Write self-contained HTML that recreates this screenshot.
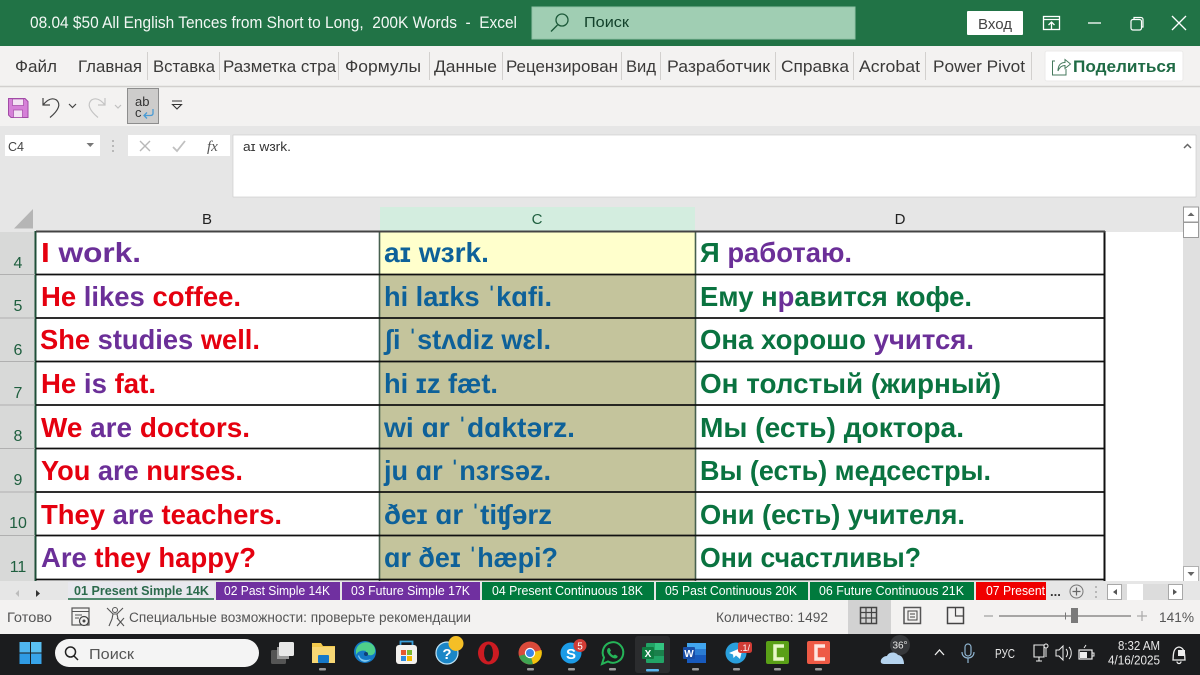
<!DOCTYPE html>
<html><head><meta charset="utf-8"><style>
html,body{margin:0;padding:0;background:#fff;width:1200px;height:675px;overflow:hidden}
svg{display:block;filter:blur(.35px)}
text{font-family:"Liberation Sans","DejaVu Sans",sans-serif}
.b{font-weight:700;font-size:28px}
.r{fill:#e5000f}.p{fill:#6b2f98}.u{fill:#0e6199}.g{fill:#0a7340}
.rib{font-size:17px;fill:#3b3a39}
.sep{stroke:#d2d0ce;stroke-width:1}
.rn{font-size:16px;fill:#1f5f3f;text-anchor:middle}
.tab{font-size:13px;fill:#fff}
.st{font-size:13.5px;fill:#555}
.tb{font-size:13px;fill:#e8e8e8}
</style></head><body>
<svg width="1200" height="675" viewBox="0 0 1200 675" xmlns="http://www.w3.org/2000/svg">
<!-- title bar -->
<rect width="1200" height="46" fill="#217346"/>
<text x="30" y="28" font-size="16.500" fill="#f2f7f4" textLength="487" lengthAdjust="spacingAndGlyphs" xml:space="preserve">08.04 $50 All English Tences from Short to Long,  200K Words  -  Excel</text>
<rect x="532" y="7" width="323" height="32" fill="#a0ceb3" stroke="#8fc2a5"/>
<circle cx="562" cy="20" r="6" fill="none" stroke="#1d5a3a" stroke-width="1.3"/><path d="M557.500 25 L551 31.500" stroke="#1d5a3a" stroke-width="1.4"/>
<text x="584" y="27" font-size="14.500" fill="#12402a" textLength="45" lengthAdjust="spacingAndGlyphs">Поиск</text>
<rect x="967" y="11" width="56" height="24" fill="#fff" rx="1"/>
<text x="978" y="29" font-size="15" fill="#444" textLength="34" lengthAdjust="spacingAndGlyphs">Вход</text>
<rect x="1043.500" y="16.500" width="16" height="13" fill="none" stroke="#fff" stroke-width="1.300"/><path d="M1044 19.500H1059M1051.500 29V22.500M1048.500 25L1051.500 22L1054.500 25" stroke="#fff" fill="none" stroke-width="1.300"/>
<path d="M1088 23H1101" stroke="#fff" stroke-width="1.300"/>
<rect x="1131" y="19.500" width="10.500" height="10.500" rx="2" fill="none" stroke="#fff" stroke-width="1.200"/><path d="M1134 19V17.500h7a2 2 0 0 1 2 2V27H1142" fill="none" stroke="#fff" stroke-width="1.200"/>
<path d="M1172 16L1186 30M1186 16L1172 30" stroke="#fff" stroke-width="1.300"/>
<!-- ribbon tabs -->
<rect y="46" width="1200" height="80" fill="#f3f2f1"/>
<path d="M0 86.500H1200" stroke="#d2d0ce" stroke-width="1.400"/>
<g class="rib">
<text x="15" y="72" class="rib" textLength="42" lengthAdjust="spacingAndGlyphs">Файл</text>
<text x="78" y="72" class="rib" textLength="64" lengthAdjust="spacingAndGlyphs">Главная</text>
<text x="153" y="72" class="rib" textLength="62" lengthAdjust="spacingAndGlyphs">Вставка</text>
<text x="223" y="72" class="rib" textLength="113" lengthAdjust="spacingAndGlyphs">Разметка стра</text>
<text x="345" y="72" class="rib" textLength="76" lengthAdjust="spacingAndGlyphs">Формулы</text>
<text x="434" y="72" class="rib" textLength="63" lengthAdjust="spacingAndGlyphs">Данные</text>
<text x="506" y="72" class="rib" textLength="112" lengthAdjust="spacingAndGlyphs">Рецензирован</text>
<text x="626" y="72" class="rib" textLength="30" lengthAdjust="spacingAndGlyphs">Вид</text>
<text x="667" y="72" class="rib" textLength="103" lengthAdjust="spacingAndGlyphs">Разработчик</text>
<text x="781" y="72" class="rib" textLength="68" lengthAdjust="spacingAndGlyphs">Справка</text>
<text x="859" y="72" class="rib" textLength="61" lengthAdjust="spacingAndGlyphs">Acrobat</text>
<text x="933" y="72" class="rib" textLength="92" lengthAdjust="spacingAndGlyphs">Power Pivot</text>
</g>
<path class="sep" d="M147.500 52V80M219.500 52V80M338.500 52V80M429.500 52V80M502.500 52V80M621.500 52V80M660.500 52V80M775.500 52V80M853.500 52V80M925.500 52V80M1031.500 52V80"/>
<rect x="1045" y="51" width="138" height="30" rx="2" fill="#fff" stroke="#ebeae9"/>
<path d="M1055 61H1052.500V75H1066V69M1058 71C1058 65 1061 62.500 1065 62.500V59.500L1070.500 64L1065 68.500V65.500C1062 65.500 1059.500 67 1058 71Z" fill="none" stroke="#46795d" stroke-width="1"/>
<text x="1073" y="72" font-size="16.500" font-weight="700" fill="#1f6b45" textLength="103" lengthAdjust="spacingAndGlyphs">Поделиться</text>
<!-- QAT -->
<path d="M8.500 98.500H25L28 101.500V117.500H11L8.500 115Z" fill="#d680d8" stroke="#a24ba6"/>
<rect x="12.500" y="99" width="11" height="6.500" fill="#f3e2f3" stroke="#a24ba6" stroke-width=".7"/><rect x="13.500" y="110" width="9" height="7.500" fill="#f3e2f3" stroke="#a24ba6" stroke-width=".7"/>
<path d="M43 98V105H50M43 105C47 100 52 97 56.500 100C61 104 59 110 50 117.500" fill="none" stroke="#444" stroke-width="1.200"/>
<path d="M69 104L72.500 107.500L76 104" fill="none" stroke="#444" stroke-width="1.200"/>
<path d="M105 98V105H98M105 105C101 100 96 97 91.500 100C87 104 89 110 98 117.500" fill="none" stroke="#c4c4c4" stroke-width="1.200"/>
<path d="M115 105L118 108L121 105" fill="none" stroke="#c0c0c0" stroke-width="1.200"/>
<rect x="127.500" y="88.500" width="31" height="35" fill="#cdcccb" stroke="#8d8d8d"/>
<text x="135" y="106" font-size="13" fill="#333">ab</text><text x="135" y="117" font-size="13" fill="#333">c</text>
<path d="M153 109V113.500C153 115 152 115.500 150 115.500H144M147 112.500L144 115.500L147 118.500" fill="none" stroke="#4a9bd4" stroke-width="1.300"/>
<path d="M172 101H182M172.500 104.500L177 109L181.500 104.500Z" stroke="#333" stroke-width="1.100" fill="#f3f2f1"/>
<!-- formula bar -->
<rect y="126" width="1200" height="81" fill="#e6e6e6"/>
<rect x="5" y="135" width="95" height="21" fill="#fff"/>
<text x="8" y="151" font-size="13" fill="#444" textLength="16" lengthAdjust="spacingAndGlyphs">C4</text>
<path d="M86.500 143H94L90.250 147Z" fill="#777"/>
<circle cx="113" cy="141" r="1" fill="#aaa"/><circle cx="113" cy="146" r="1" fill="#aaa"/><circle cx="113" cy="151" r="1" fill="#aaa"/>
<rect x="128" y="135" width="102" height="21" fill="#fff"/>
<path d="M140 141L150 151M150 141L140 151" stroke="#b8b8b8" stroke-width="1.400"/>
<path d="M173 147L177 151L185 141" fill="none" stroke="#c0c0c0" stroke-width="1.800"/>
<text x="207" y="151" font-size="15" font-style="italic" fill="#555" style="font-family:'Liberation Serif',serif">fx</text>
<rect x="233" y="135" width="963" height="62" fill="#fff" stroke="#c9c9c9" stroke-width=".6"/>
<text x="243" y="151" font-size="13" fill="#333" textLength="48" lengthAdjust="spacingAndGlyphs">aɪ wɜrk.</text>
<path d="M1184 148L1187.500 144.500L1191 148" fill="none" stroke="#666" stroke-width="1.500"/>
<!-- sheet headers -->
<rect y="207" width="1184" height="25" fill="#e6e6e6"/>
<path d="M14 228.500L33 209V228.500Z" fill="#b5b5b5"/>
<rect x="380" y="207" width="315" height="25" fill="#d3eddf"/>
<text x="207" y="224" font-size="15" fill="#222" text-anchor="middle">B</text>
<text x="537" y="224" font-size="15" fill="#1f5f3f" text-anchor="middle">C</text>
<text x="900" y="224" font-size="15" fill="#222" text-anchor="middle">D</text>
<rect y="232" width="36" height="350" fill="#d8d9d8"/>
<!-- cells -->
<rect x="36" y="232" width="1069" height="350" fill="#fff"/>
<rect x="1105" y="232" width="78" height="350" fill="#fff"/>
<rect x="380" y="232" width="315" height="350" fill="#c4c49c"/>
<rect x="380" y="232" width="315" height="42" fill="#ffffcc"/>
<path d="M35.500 231V581" stroke="#1f4f38" stroke-width="2"/>
<path d="M379.500 231V581M695.500 231V581" stroke="#47604f" stroke-width="1.600"/>
<path d="M1104.500 231V581" stroke="#111" stroke-width="2"/>
<path d="M36 231.500H1105" stroke="#444" stroke-width="2"/>
<path d="M36 274.500H1105M36 318H1105M36 361.500H1105M36 405H1105M36 448.500H1105M36 492H1105M36 535.500H1105M36 579.500H1105" stroke="#111" stroke-width="1.700"/>
<path d="M0 274.500H35M0 318H35M0 361.500H35M0 405H35M0 448.500H35M0 492H35M0 535.500H35" stroke="#b0b0b0" stroke-width="1"/>
<g>
<text class="rn" x="18" y="268">4</text><text class="rn" x="18" y="311">5</text><text class="rn" x="18" y="355">6</text><text class="rn" x="18" y="398">7</text><text class="rn" x="18" y="441">8</text><text class="rn" x="18" y="485">9</text><text class="rn" x="18" y="528">10</text><text class="rn" x="18" y="572">11</text>
</g>
<g class="b">
<text class="b" x="41" y="262" textLength="100" lengthAdjust="spacingAndGlyphs" xml:space="preserve"><tspan class="r">I </tspan><tspan class="p">work.</tspan></text>
<text class="b" x="41" y="306" textLength="200" lengthAdjust="spacingAndGlyphs" xml:space="preserve"><tspan class="r">He </tspan><tspan class="p">likes </tspan><tspan class="r">coffee.</tspan></text>
<text class="b" x="40" y="349" textLength="220" lengthAdjust="spacingAndGlyphs" xml:space="preserve"><tspan class="r">She </tspan><tspan class="p">studies </tspan><tspan class="r">well.</tspan></text>
<text class="b" x="41" y="393" textLength="115" lengthAdjust="spacingAndGlyphs" xml:space="preserve"><tspan class="r">He </tspan><tspan class="p">is </tspan><tspan class="r">fat.</tspan></text>
<text class="b" x="41" y="437" textLength="209" lengthAdjust="spacingAndGlyphs" xml:space="preserve"><tspan class="r">We </tspan><tspan class="p">are </tspan><tspan class="r">doctors.</tspan></text>
<text class="b" x="41" y="480" textLength="202" lengthAdjust="spacingAndGlyphs" xml:space="preserve"><tspan class="r">You </tspan><tspan class="p">are </tspan><tspan class="r">nurses.</tspan></text>
<text class="b" x="41" y="524" textLength="241" lengthAdjust="spacingAndGlyphs" xml:space="preserve"><tspan class="r">They </tspan><tspan class="p">are </tspan><tspan class="r">teachers.</tspan></text>
<text class="b" x="41" y="567" textLength="215" lengthAdjust="spacingAndGlyphs" xml:space="preserve"><tspan class="p">Are </tspan><tspan class="r">they happy?</tspan></text>

<text class="b u" x="384" y="262" textLength="105" lengthAdjust="spacingAndGlyphs">aɪ wɜrk.</text>
<text class="b u" x="384" y="306" textLength="168" lengthAdjust="spacingAndGlyphs">hi laɪks ˈkɑfi.</text>
<text class="b u" x="384" y="349" textLength="167" lengthAdjust="spacingAndGlyphs">ʃi ˈstʌdiz wɛl.</text>
<text class="b u" x="384" y="393" textLength="114" lengthAdjust="spacingAndGlyphs">hi ɪz fæt.</text>
<text class="b u" x="384" y="437" textLength="191" lengthAdjust="spacingAndGlyphs">wi ɑr ˈdɑktərz.</text>
<text class="b u" x="384" y="480" textLength="167" lengthAdjust="spacingAndGlyphs">ju ɑr ˈnɜrsəz.</text>
<text class="b u" x="384" y="524" textLength="168" lengthAdjust="spacingAndGlyphs">ðeɪ ɑr ˈtiʧərz</text>
<text class="b u" x="384" y="567" textLength="174" lengthAdjust="spacingAndGlyphs">ɑr ðeɪ ˈhæpi?</text>

<text class="b" x="700" y="262" textLength="152" lengthAdjust="spacingAndGlyphs" xml:space="preserve"><tspan class="g">Я </tspan><tspan class="p">работаю.</tspan></text>
<text class="b" x="700" y="306" textLength="272" lengthAdjust="spacingAndGlyphs" xml:space="preserve"><tspan class="g">Ему н</tspan><tspan class="p">р</tspan><tspan class="g">авится кофе.</tspan></text>
<text class="b" x="700" y="349" textLength="274" lengthAdjust="spacingAndGlyphs" xml:space="preserve"><tspan class="g">Она хорошо </tspan><tspan class="p">учится.</tspan></text>
<text class="b g" x="700" y="393" textLength="301" lengthAdjust="spacingAndGlyphs">Он толстый (жирный)</text>
<text class="b g" x="700" y="437" textLength="264" lengthAdjust="spacingAndGlyphs">Мы (есть) доктора.</text>
<text class="b g" x="700" y="480" textLength="291" lengthAdjust="spacingAndGlyphs">Вы (есть) медсестры.</text>
<text class="b g" x="700" y="524" textLength="265" lengthAdjust="spacingAndGlyphs">Они (есть) учителя.</text>
<text class="b g" x="700" y="567" textLength="221" lengthAdjust="spacingAndGlyphs">Они счастливы?</text>
</g>
<!-- vertical scrollbar -->
<rect x="1183" y="207" width="17" height="375" fill="#e0e0e0"/>
<rect x="1183.500" y="207" width="15" height="15" fill="#fff" stroke="#9a9a9a"/>
<path d="M1187.500 216H1194.500L1191 212.500Z" fill="#666"/>
<rect x="1183.500" y="222.500" width="15" height="15" fill="#fff" stroke="#9a9a9a"/>
<rect x="1183.500" y="566.500" width="15" height="15" fill="#fff" stroke="#b0b0b0"/>
<path d="M1187.500 572H1194.500L1191 576Z" fill="#666"/>
<!-- sheet tabs -->
<rect y="581" width="1200" height="19" fill="#e6e6e6"/>
<path d="M19 590V597L15.500 593.500Z" fill="#bcbcbc"/>
<path d="M36 590V597L40 593.500Z" fill="#333"/>
<rect x="68" y="582" width="146" height="18" fill="#e8e8ee"/><path d="M68 599H214" stroke="#1f6b45" stroke-width="1.500"/>
<text x="74" y="595" font-size="13" font-weight="700" fill="#2c6a4c" textLength="135" lengthAdjust="spacingAndGlyphs">01 Present Simple 14K</text>
<rect x="216" y="582" width="124" height="18" fill="#7030a0"/>
<text class="tab" x="224" y="595" textLength="106" lengthAdjust="spacingAndGlyphs">02 Past Simple 14K</text>
<rect x="342" y="582" width="138" height="18" fill="#7030a0"/>
<text class="tab" x="351" y="595" textLength="119" lengthAdjust="spacingAndGlyphs">03 Future Simple 17K</text>
<rect x="482" y="582" width="172" height="18" fill="#007a3d"/>
<text class="tab" x="492" y="595" textLength="151" lengthAdjust="spacingAndGlyphs">04 Present Continuous 18K</text>
<rect x="656" y="582" width="152" height="18" fill="#007a3d"/>
<text class="tab" x="665" y="595" textLength="132" lengthAdjust="spacingAndGlyphs">05 Past Continuous 20K</text>
<rect x="810" y="582" width="164" height="18" fill="#007a3d"/>
<text class="tab" x="819" y="595" textLength="145" lengthAdjust="spacingAndGlyphs">06 Future Continuous 21K</text>
<rect x="976" y="582" width="70" height="18" fill="#f00000"/>
<text class="tab" x="986" y="595" textLength="59" lengthAdjust="spacingAndGlyphs">07 Present</text>
<text x="1050" y="596" font-size="13" font-weight="700" fill="#333">...</text>
<circle cx="1076.500" cy="591.500" r="6.500" fill="none" stroke="#777"/><path d="M1072.500 591.500H1080.500M1076.500 587.500V595.500" stroke="#666" stroke-width="1.200"/>
<circle cx="1096" cy="587" r="1" fill="#aaa"/><circle cx="1096" cy="592" r="1" fill="#aaa"/><circle cx="1096" cy="597" r="1" fill="#aaa"/>
<rect x="1122" y="584" width="60" height="16" fill="#dcdcdc"/>
<rect x="1107.500" y="584.500" width="14" height="15" fill="#fff" stroke="#a8a8a8"/><path d="M1117 589V595L1113 592Z" fill="#555"/>
<rect x="1127" y="584" width="16" height="16" fill="#fff"/>
<rect x="1168.500" y="584.500" width="14" height="15" fill="#fff" stroke="#a8a8a8"/><path d="M1173 589V595L1177 592Z" fill="#555"/>
<!-- status -->
<rect y="600" width="1200" height="34" fill="#f3f2f1"/>
<text class="st" x="7" y="622" textLength="45" lengthAdjust="spacingAndGlyphs">Готово</text>
<rect x="72" y="608" width="17" height="17" fill="none" stroke="#555" stroke-width="1.200"/><path d="M72 611.500H89M75 615H82M75 618H79" stroke="#555"/><circle cx="84" cy="621" r="4.500" fill="#f3f2f1" stroke="#444" stroke-width="1.200"/><circle cx="84" cy="621" r="1.500" fill="#444"/>
<circle cx="115" cy="610" r="2.500" fill="none" stroke="#555"/><path d="M107 608L113 614H117L123 608M113 614L112 619L109 626M117 614L118 619M117 618L124 626M124 618L117 626" fill="none" stroke="#555" stroke-width="1.100"/>
<text class="st" x="129" y="622" textLength="342" lengthAdjust="spacingAndGlyphs">Специальные возможности: проверьте рекомендации</text>
<text class="st" x="716" y="622" textLength="112" lengthAdjust="spacingAndGlyphs">Количество: 1492</text>
<rect x="848" y="600" width="43" height="34" fill="#d2d2d2"/>
<g fill="none" stroke="#444" stroke-width="1.500">
<rect x="860.500" y="607.500" width="16" height="16"/><path d="M866 608V623M871.500 608V623M861 612.500H876M861 618H876" stroke-width="1.200"/>
<rect x="904" y="607.500" width="16.500" height="16" stroke="#555"/><path d="M908 611H917V620H908ZM910 614H915M910 617H915" stroke-width="1"/>
<rect x="947.500" y="607.500" width="16" height="16"/><path d="M955.500 608V616H963" stroke-width="1.200"/>
</g>
<path d="M984 616H993" stroke="#aaa" stroke-width="1.400"/>
<path d="M999 616H1131" stroke="#777" stroke-width="1.200"/><path d="M1065.500 612.500V619.500" stroke="#777"/>
<rect x="1071" y="608" width="7" height="15" fill="#7a7a7a"/>
<path d="M1137 616H1147M1142 611V621" stroke="#aaa" stroke-width="1.200"/>
<text class="st" x="1159" y="622" textLength="35" lengthAdjust="spacingAndGlyphs">141%</text>
<!-- taskbar -->
<rect y="634" width="1200" height="41" fill="#1b1c1e"/>
<rect x="19.500" y="642" width="10.500" height="10.500" fill="#4fb6ef"/><rect x="31" y="642" width="10.500" height="10.500" fill="#5ac0f2"/><rect x="19.500" y="653.500" width="10.500" height="10.500" fill="#2f9be4"/><rect x="31" y="653.500" width="10.500" height="10.500" fill="#38a4ea"/>
<rect x="55" y="639" width="204" height="28" rx="14" fill="#f4f4f4"/>
<circle cx="70.500" cy="652" r="5" fill="none" stroke="#222" stroke-width="1.500"/><path d="M74 656L78 660" stroke="#222" stroke-width="1.500"/>
<text x="89" y="659" font-size="15" fill="#555" textLength="45" lengthAdjust="spacingAndGlyphs">Поиск</text>
<!-- task view -->
<rect x="271" y="650" width="15" height="14" rx="1.500" fill="#555"/><rect x="277" y="647" width="12" height="12" fill="#999"/><rect x="279" y="642" width="15" height="14" rx="1.500" fill="#e8e8e8"/>
<!-- explorer -->
<path d="M312 643H321L323 646H335V663H312Z" fill="#f2c94c"/><rect x="312" y="647" width="23" height="16" fill="#f7d774"/><rect x="318" y="655" width="11" height="8" rx="1" fill="#1679c9"/>
<rect x="319" y="668" width="7" height="2.500" rx="1" fill="#9a9a9a"/>
<!-- edge -->
<circle cx="365" cy="652" r="11" fill="#1479c5"/><path d="M356 650C358 642 368 640 373 645C376 648 376 654 372 655C369 656 365 654 366 651C362 650 358 651 356 655Z" fill="#4fd08a"/><path d="M359 655C360 660 366 661 371 659C366 664 360 662 358 656Z" fill="#7ec8f0"/><circle cx="366" cy="654" r="2" fill="#0f3f77"/>
<!-- store -->
<rect x="396" y="645" width="21" height="19" rx="3" fill="#f3f1ee"/><path d="M400.500 645V641.500H412.500V645" fill="none" stroke="#3aa0dc" stroke-width="1.800"/>
<rect x="401" y="650" width="5" height="5" fill="#e4572e"/><rect x="407" y="650" width="5" height="5" fill="#7cb82f"/><rect x="401" y="656" width="5" height="5" fill="#2c8be0"/><rect x="407" y="656" width="5" height="5" fill="#f5b800"/>
<!-- help -->
<circle cx="447" cy="653" r="11" fill="#1b86c7" stroke="#bfe3f5" stroke-width="1.200"/>
<text x="447" y="659" font-size="15" font-weight="700" fill="#fff" text-anchor="middle">?</text>
<circle cx="456" cy="643.500" r="7.500" fill="#f5bf26"/>
<!-- opera -->
<ellipse cx="488.500" cy="653" rx="10.500" ry="11.500" fill="#cc1b22"/><ellipse cx="488.500" cy="653" rx="4.500" ry="8.500" fill="#1b1c1e"/>
<!-- chrome -->
<circle cx="530" cy="653" r="11.500" fill="#d94a3b"/><path d="M530 653L519 656A11.500 11.500 0 0 0 533 664.100Z" fill="#3fa452"/><path d="M530 653L541.500 650A11.500 11.500 0 0 1 533 664.100Z" fill="#f4c20d"/><circle cx="530" cy="653" r="5.200" fill="#fff"/><circle cx="530" cy="653" r="4" fill="#3a86e8"/>
<rect x="527" y="668" width="7" height="2.500" rx="1" fill="#9a9a9a"/>
<!-- skype -->
<circle cx="571" cy="653" r="10.500" fill="#1c9be6"/><text x="571" y="659" font-size="15" font-weight="700" fill="#fff" text-anchor="middle">S</text>
<circle cx="580" cy="645.500" r="6.500" fill="#d13c35"/><text x="580" y="649.500" font-size="10" fill="#fff" text-anchor="middle">5</text>
<rect x="568" y="668" width="7" height="2.500" rx="1" fill="#9a9a9a"/>
<!-- whatsapp -->
<path d="M602 664L604 657.500A10.300 10.300 0 1 1 608 661.500Z" fill="#1b1c1e" stroke="#25b458" stroke-width="2"/>
<path d="M608.500 648C607 649 606.500 651 608 653.500C609.500 656 612 658 615 658.500C617 658.500 618 657 617.500 656L615 654.500L613.500 655.500C612 655 610.500 653.500 610 652L611 650.500L609.500 648Z" fill="#25b458"/>
<rect x="609" y="668" width="7" height="2.500" rx="1" fill="#9a9a9a"/>
<!-- excel -->
<rect x="635" y="636" width="35" height="37" rx="3" fill="#2b2c2e"/>
<rect x="646" y="643" width="18" height="20" rx="1" fill="#22a366"/><path d="M646 650H664V656H646Z" fill="#1a7f4b"/><path d="M655 643H664V650H655Z" fill="#33c481"/>
<rect x="642" y="647" width="12" height="12" rx="1" fill="#107c41"/><text x="648" y="657" font-size="10" font-weight="700" fill="#fff" text-anchor="middle">X</text>
<rect x="646" y="669" width="13" height="2.500" rx="1" fill="#5ab6ee"/>
<!-- word -->
<rect x="687" y="643" width="19" height="20" rx="1" fill="#2b7cd3"/><path d="M687 643H706V649H687Z" fill="#41a5ee"/><path d="M687 655H706V663H687Z" fill="#185abd"/>
<rect x="683" y="647" width="12" height="12" rx="1" fill="#1a4ea6"/><text x="689" y="657" font-size="10" font-weight="700" fill="#fff" text-anchor="middle">W</text>
<rect x="692" y="668" width="7" height="2.500" rx="1" fill="#9a9a9a"/>
<!-- telegram -->
<circle cx="736" cy="653" r="10.500" fill="#2a9fdc"/><path d="M729 653L743 647L740 659L736 655.500L733.500 658L733 654.500Z" fill="#fff"/>
<rect x="738" y="642" width="14" height="11" rx="2.500" fill="#d13c35"/><text x="745" y="651" font-size="9" fill="#fff" text-anchor="middle">.1/</text>
<rect x="733" y="668" width="7" height="2.500" rx="1" fill="#9a9a9a"/>
<!-- camtasia green -->
<rect x="766" y="641" width="23" height="23" rx="2" fill="#5aa017"/><path d="M784 646H775V659H784" fill="none" stroke="#e8f7c8" stroke-width="3.500"/>
<rect x="774" y="668" width="7" height="2.500" rx="1" fill="#9a9a9a"/>
<!-- camtasia red -->
<rect x="807" y="641" width="23" height="23" rx="2" fill="#ee5a45"/><path d="M825 646H816V659H825" fill="none" stroke="#fde6e0" stroke-width="3.500"/>
<rect x="815" y="668" width="7" height="2.500" rx="1" fill="#9a9a9a"/>
<!-- weather -->
<circle cx="900" cy="645" r="10" fill="#36383b"/>
<text x="900" y="648.500" font-size="10" fill="#e8e8e8" text-anchor="middle">36°</text>
<path d="M884 664C878 664 881 656 887 656C889 651 896 652 898 655C902 655 904 660 904 664Z" fill="#b5d3ee"/>
<path d="M935 655L939.500 650L944 655" fill="none" stroke="#eee" stroke-width="1.300"/>
<rect x="965" y="644" width="6" height="12" rx="3" fill="none" stroke="#8fb4d0" stroke-width="1.200"/><path d="M962 652C962 660 974 660 974 652M968 658V663" fill="none" stroke="#8fb4d0" stroke-width="1.200"/>
<text class="tb" x="995" y="658" textLength="20" lengthAdjust="spacingAndGlyphs">РУС</text>
<path d="M1034 645H1044V657H1034ZM1036 661H1042M1039 657V661" fill="none" stroke="#eee" stroke-width="1.100"/><circle cx="1046" cy="646" r="2" fill="none" stroke="#eee"/><path d="M1046 648V657" stroke="#eee"/>
<path d="M1056 650H1059L1063 646V660L1059 656H1056ZM1066 649C1068 651 1068 655 1066 657M1069 647C1072 650 1072 656 1069 659" fill="none" stroke="#eee" stroke-width="1"/>
<rect x="1079" y="650" width="13" height="9" fill="none" stroke="#eee" stroke-width="1.200"/><rect x="1080" y="652" width="7" height="6" fill="#eee"/><path d="M1092 653H1094V656H1092M1084 648L1086 645" stroke="#eee" fill="none"/>
<text class="tb" x="1118" y="650" textLength="42" lengthAdjust="spacingAndGlyphs">8:32 AM</text>
<text class="tb" x="1108" y="664.500" textLength="52" lengthAdjust="spacingAndGlyphs">4/16/2025</text>
<path d="M1173 660C1173.500 656 1172.500 648 1179 647C1185.500 648 1184.500 656 1185 660ZM1177 661.500A2 2 0 0 0 1181 661.500" fill="none" stroke="#eee" stroke-width="1.300"/><rect x="1178" y="650" width="7" height="6" fill="#eee"/>
</svg>
</body></html>
